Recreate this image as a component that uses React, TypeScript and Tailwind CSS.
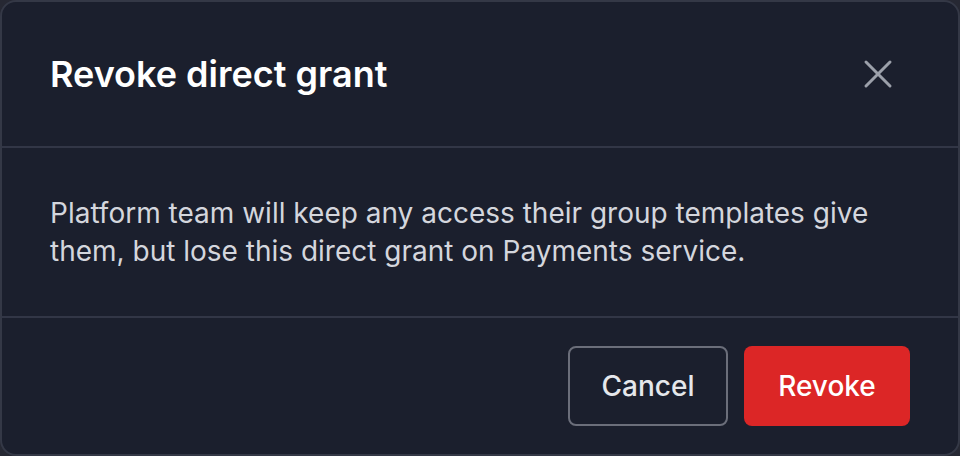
import React from 'react';
import { X } from 'lucide-react';

const App: React.FC = () => {
  return (
    <div
      className="w-[960px] h-[456px] bg-[#262833]"
      style={{ fontFamily: 'Inter, "Noto Sans", sans-serif' }}
    >
      <div className="h-full flex flex-col bg-[#1b1f2d] border-2 border-[#343846] rounded-[16px] overflow-hidden">
        {/* Header */}
        <div className="h-[146px] flex items-center justify-between pl-[48px] pr-[56px] border-b-2 border-[#323646]">
          <h2 className="text-[36px] font-semibold text-white">Revoke direct grant</h2>
          <button className="text-[#9ca0aa]">
            <X className="w-[48px] h-[48px]" strokeWidth={1.5} />
          </button>
        </div>

        {/* Body */}
        <div className="h-[170px] flex items-center pl-[48px] pr-[72px] border-b-2 border-[#323646]">
          <p className="text-[28px] leading-[38px] text-[#d4d6dd]">
            Platform team will keep any access their group templates give them, but lose this direct grant on Payments service.
          </p>
        </div>

        {/* Footer */}
        <div className="flex-1 flex items-center justify-end gap-4 pr-[48px]">
          <button className="w-[160px] h-[80px] rounded-[8px] border-2 border-[#6b6e7a] text-[28px] font-medium text-[#e5e7eb]">
            Cancel
          </button>
          <button className="w-[166px] h-[80px] rounded-[8px] bg-[#dc2626] text-[28px] font-medium text-white">
            Revoke
          </button>
        </div>
      </div>
    </div>
  );
};

export default App;
